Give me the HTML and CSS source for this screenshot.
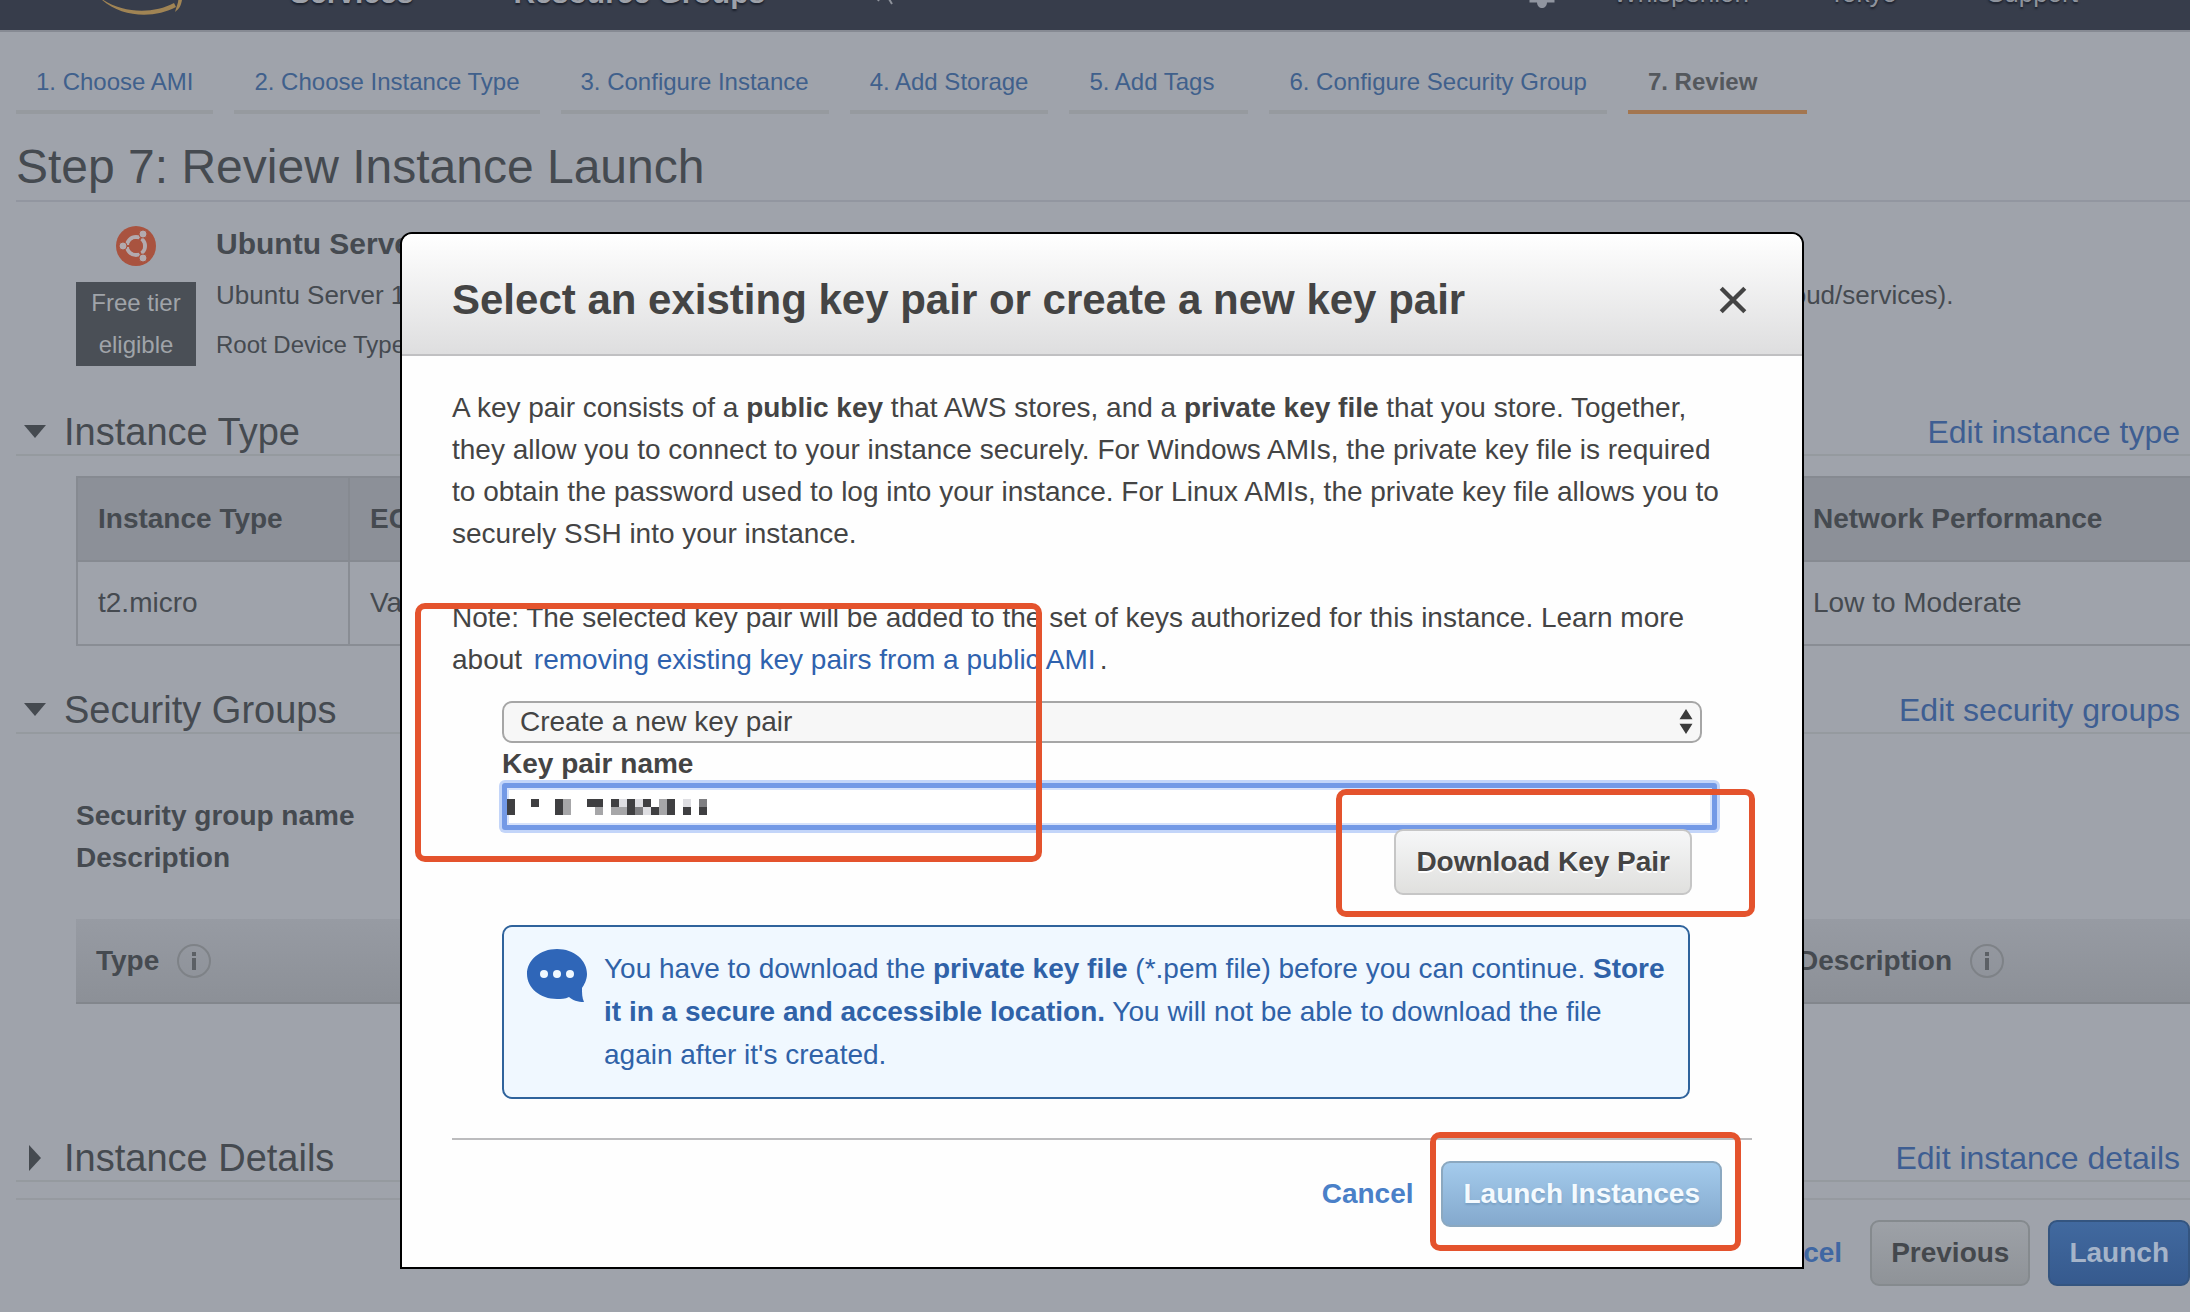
FILE: index.html
```html
<!DOCTYPE html>
<html lang="en">
<head>
<meta charset="utf-8">
<title>Review Instance Launch</title>
<link rel="stylesheet" href="styles.css">
</head>
<body>
<header class="topbar">
  <svg class="logo" viewBox="0 0 90 74" aria-hidden="true">
    <path d="M2 40C22 57 56 59 78 47l2 4C58 63 22 62 2 40z" fill="#a08454"/>
    <path d="M68 40c10-3 20-2 18 4-1 6-3 9-7 12 2-7 4-11 3-13-2-2-8-1-14 0z" fill="#a08454"/>
  </svg>
  <a class="top-main" href="#">Services</a>
  <a class="top-main groups" href="#">Resource Groups</a>
  <svg class="pin" viewBox="0 0 20 74" aria-hidden="true"><path d="M3 45l4-7M17 48l-6-10" stroke="#8d929b" stroke-width="2" fill="none"/></svg>
  <svg class="bell" viewBox="0 0 26 74" aria-hidden="true"><path d="M2 30h22v15H2z" fill="none" stroke="#9095a0" stroke-width="3"/><path d="M8 46h10c0 8-10 8-10 0z" fill="#9095a0"/></svg>
  <a class="top-sub user" href="#">Whisperlion</a>
  <a class="top-sub region" href="#">Tokyo</a>
  <a class="top-sub" href="#">Support</a>
</header>

<main class="page">
  <nav class="steps">
    <a href="#">1. Choose AMI</a>
    <a href="#">2. Choose Instance Type</a>
    <a href="#">3. Configure Instance</a>
    <a href="#">4. Add Storage</a>
    <a class="tags" href="#">5. Add Tags</a>
    <a href="#">6. Configure Security Group</a>
    <a class="current" href="#">7. Review</a>
  </nav>
  <h1 class="page-title">Step 7: Review Instance Launch</h1>

  <section class="ami">
    <div class="ami-side">
      <svg class="ubuntu" viewBox="0 0 40 40" aria-hidden="true">
        <circle cx="20" cy="20" r="20" fill="#a9533f"/>
        <circle cx="20" cy="20" r="9" fill="none" stroke="#b3aaae" stroke-width="4"/>
        <g stroke="#a9533f" stroke-width="2"><path d="M20 20L6 20M20 20l7-12M20 20l7 12"/></g>
        <circle cx="20" cy="20" r="7" fill="#a9533f"/>
        <g fill="#b3aaae" stroke="#a9533f" stroke-width="1"><circle cx="7" cy="20" r="4"/><circle cx="27" cy="8" r="4"/><circle cx="27" cy="32" r="4"/></g>
      </svg>
      <div class="badge">Free tier eligible</div>
    </div>
    <div class="ami-text">
      <h2>Ubuntu Server 18.04 LTS (HVM), SSD Volume Type</h2>
      <p class="ami-desc">Ubuntu Server 18.04 LTS (HVM),EBS General Purpose (SSD) Volume Type. Support available from Canonical (http://www.ubuntu.com/cloud/services).</p>
      <p class="ami-root">Root Device Type: ebs</p>
    </div>
  </section>

  <div class="section-head first">
    <svg class="caret" viewBox="0 0 26 26" aria-hidden="true"><path d="M2 6h22L13 19z"/></svg>
    <h2>Instance Type</h2>
    <a href="#">Edit instance type</a>
  </div>
  <table class="types">
    <thead><tr><th class="c-type">Instance Type</th><th>ECUs</th><th>vCPUs</th><th>Memory (GiB)</th><th class="c-net">Network Performance</th></tr></thead>
    <tbody><tr><td>t2.micro</td><td>Variable</td><td>1</td><td>1</td><td>Low to Moderate</td></tr></tbody>
  </table>

  <div class="section-head second">
    <svg class="caret" viewBox="0 0 26 26" aria-hidden="true"><path d="M2 6h22L13 19z"/></svg>
    <h2>Security Groups</h2>
    <a href="#">Edit security groups</a>
  </div>
  <div class="group-meta"><div>Security group name</div><div>Description</div></div>
  <table class="rules">
    <thead><tr>
      <th><span class="with-info">Type<svg viewBox="0 0 36 36" aria-hidden="true"><circle cx="18" cy="18" r="16"/><path d="M18 15v12M18 9v4"/></svg></span></th>
      <th>Protocol</th><th>Source</th>
      <th class="c-desc"><span class="with-info">Description<svg viewBox="0 0 36 36" aria-hidden="true"><circle cx="18" cy="18" r="16"/><path d="M18 15v12M18 9v4"/></svg></span></th>
    </tr></thead>
  </table>

  <div class="section-head third">
    <svg class="caret" viewBox="0 0 26 26" aria-hidden="true"><path d="M7 0v26l12-13z"/></svg>
    <h2>Instance Details</h2>
    <a href="#">Edit instance details</a>
  </div>
  <footer class="page-foot">
    <a href="#">Cancel</a>
    <button class="btn dim" type="button">Previous</button>
    <button class="btn dim-primary" type="button">Launch</button>
  </footer>
</main>

<div class="overlay">
  <div class="modal" role="dialog" aria-labelledby="dlg-title">
    <div class="modal-head">
      <h2 id="dlg-title">Select an existing key pair or create a new key pair</h2>
      <button class="close" type="button" aria-label="Close"><svg viewBox="0 0 28 28"><path d="M3 3l22 22M25 3L3 25"/></svg></button>
    </div>
    <div class="modal-body">
      <p class="intro">A key pair consists of a <b>public key</b> that AWS stores, and a <b>private key file</b> that you store. Together, they allow you to connect to your instance securely. For Windows AMIs, the private key file is required to obtain the password used to log into your instance. For Linux AMIs, the private key file allows you to securely SSH into your instance.</p>
      <p class="note">Note: The selected key pair will be added to the set of keys authorized for this instance. Learn more about <a href="#">removing existing key pairs from a public AMI</a>.</p>
      <form class="key-form">
        <div class="select-wrap">
          <select aria-label="Key pair option"><option>Create a new key pair</option></select>
          <svg viewBox="0 0 14 28" aria-hidden="true"><path d="M0 11L7 0l7 11zM0 16h14L7 27z"/></svg>
        </div>
        <label for="key-name">Key pair name</label>
        <div class="name-wrap">
          <input id="key-name" type="text">
          <svg viewBox="0 0 25 2" preserveAspectRatio="none" shape-rendering="crispEdges" aria-hidden="true">
            <path fill="#3f3f41" d="M0 0h1v2H0zM3 0h1v1H3zM6 0h1v2H6zM10 0h2v1h-2zM13 0h1v1h-1zM15 0h1v2h-1zM17 0h1v1h-1zM18 1h1v1h-1zM20 0h1v2h-1zM22 1h1v1h-1zM24 1h1v1h-1z"/>
            <path fill="#a6a6a8" d="M7 0h1v2H7zM11 1h1v1h-1zM13 1h2v1h-2zM19 0h1v2h-1z"/>
            <path fill="#7f7f82" d="M16 1h1v1h-1zM24 0h1v1h-1z"/>
            <path fill="#dedee2" d="M14 0h1v1h-1zM16 0h1v1h-1zM17 1h1v1h-1zM22 0h1v1h-1z"/>
          </svg>
        </div>
        <button class="btn download" type="button">Download Key Pair</button>
      </form>
      <div class="notice">
        <svg viewBox="0 0 62 54" aria-hidden="true"><path d="M31 0c17 0 30 11 30 25 0 6-3 11-5 14 0 5 0 10 2 14-6 0-12-2-15-5-4 2-8 2-12 2C14 50 1 39 1 25S14 0 31 0z" fill="#2f66b8"/><g fill="#f0f8ff"><circle cx="18" cy="25" r="4"/><circle cx="31" cy="25" r="4"/><circle cx="44" cy="25" r="4"/></g></svg>
        <p>You have to download the <b>private key file</b> (*.pem file) before you can continue. <b>Store it in a secure and accessible location.</b> You will not be able to download the file again after it's created.</p>
      </div>
      <div class="modal-foot">
        <a href="#">Cancel</a>
        <button class="btn launch" type="button">Launch Instances</button>
      </div>
    </div>
    <div class="mark mark-form"></div>
    <div class="mark mark-download"></div>
    <div class="mark mark-launch"></div>
  </div>
</div>
</body>
</html>
```
FILE: styles.css
```css
* { box-sizing: border-box; }
body {
  margin: 0;
  position: relative;
  min-height: 100vh;
  overflow: hidden;
  background: #9fa3ab;
  color: #454a50;
  font: 28px/42px "Liberation Sans", Arial, sans-serif;
}
h1, h2, p { margin: 0; font-weight: normal; }
a { color: #3e5e92; text-decoration: none; }
svg { display: block; flex: none; }

/* The bar is mostly scrolled out above the window. */
.topbar {
  display: flex;
  align-items: center;
  height: 76px;
  margin-top: -44px;
  padding: 0 112px 0 96px;
  background: #373d4b;
  border-bottom: 2px solid #868a93;
}
.topbar a { text-shadow: 0 2px 2px #1c212d; }
.logo { width: 90px; height: 74px; margin-right: 104px; }
.top-main { color: #9da1a9; font-size: 30px; font-weight: bold; }
.groups { margin-left: 100px; }
.pin { width: 20px; height: 74px; margin-left: 110px; }
.bell { width: 26px; height: 74px; margin-left: auto; }
.top-sub { color: #8e939c; font-size: 26px; }
.user { margin: 0 80px 0 58px; }
.region { margin-right: 90px; }

.page { padding-left: 16px; }
.steps { display: flex; gap: 21px; padding-top: 30px; font-size: 24px; line-height: 40px; }
.steps a { padding: 0 20px 8px; border-bottom: 4px solid #969a9f; color: #40608c; }
.steps .tags { padding-right: 34px; }
.steps .current { padding-right: 50px; color: #54585d; font-weight: bold; border-color: #a37650; }
.page-title {
  margin-top: 24px;
  padding-bottom: 4px;
  border-bottom: 2px solid #9296a0;
  font-size: 48px;
  line-height: 58px;
}

.ami { display: flex; gap: 20px; padding: 20px 0 0 60px; white-space: nowrap; }
.ami-side { width: 120px; padding-top: 4px; }
.ubuntu { width: 40px; height: 40px; margin: 0 auto 16px; }
.badge {
  padding: 0 10px;
  background: #4a4f56;
  color: #a0a4a9;
  font-size: 24px;
  text-align: center;
  white-space: normal;
}
.ami-text h2 { margin-bottom: 4px; font-size: 30px; font-weight: bold; line-height: 44px; }
.ami-desc { font-size: 26px; line-height: 50px; }
.ami-root { font-size: 24px; line-height: 50px; }

.section-head {
  display: flex;
  align-items: center;
  height: 46px;
  padding: 0 10px 0 6px;
  border-bottom: 2px solid #959a9f;
}
.section-head h2 { flex: 1; font-size: 38px; }
.section-head a { font-size: 32px; }
.caret { width: 26px; height: 26px; margin-right: 16px; fill: #454a50; }
.first { margin-top: 40px; }
.second { margin-top: 42px; }
.third { margin-top: 132px; }

table { width: calc(100% - 60px); margin-left: 60px; table-layout: fixed; border-collapse: collapse; }
th, td { text-align: left; white-space: nowrap; }
.types { margin-top: 20px; }
.types th, .types td { height: 84px; padding: 0 20px; border: 2px solid #898d94; border-right: 0; }
.types th { background: #8c9098; border-color: #868a91; }
.types .c-type { width: 272px; }
.types .c-net { width: 398px; }
.group-meta { margin: 61px 0 40px 60px; font-weight: bold; }
.rules th { height: 84px; padding: 0 20px; background: linear-gradient(#979ba3, #8c9097); border-bottom: 2px solid #82868c; }
.rules .c-desc { width: 412px; }
.with-info { display: flex; align-items: center; gap: 17px; }
.with-info svg { width: 36px; height: 36px; fill: none; stroke: #7e8287; stroke-width: 2; }
.with-info path { stroke: #5c6065; stroke-width: 4; }

.page-foot {
  display: flex;
  justify-content: flex-end;
  align-items: center;
  margin-top: 16px;
  padding: 20px 0 24px;
  border-top: 2px solid #969aa0;
}
.page-foot a { margin-right: 28px; color: #3f67a3; font-weight: bold; }
.btn {
  height: 66px;
  padding: 0 20px;
  border: 2px solid;
  border-radius: 9px;
  font: bold 28px/42px "Liberation Sans", Arial, sans-serif;
}
.page-foot .btn { padding: 0 19px; }
.dim { margin-right: 18px; background: linear-gradient(#9da1a7, #8f9398); border-color: #858a8e; color: #44484d; }
.dim-primary { background: linear-gradient(#41699f, #365a8e); border-color: #345580; color: #a5b4c9; }

.overlay {
  position: absolute;
  top: 232px;
  left: 0;
  right: 0;
  display: flex;
  justify-content: center;
  padding-left: 14px;
}
.modal {
  position: relative;
  width: 64%;
  min-width: 1404px;
  background: #fefefe;
  border: 2px solid #000;
  border-radius: 12px 12px 0 0;
  color: #444;
}
.modal a { color: #2f62ae; }
.modal-head {
  display: flex;
  align-items: center;
  justify-content: space-between;
  height: 122px;
  padding: 12px 54px 0 50px;
  border-bottom: 2px solid #c0c0c2;
  border-radius: 10px 10px 0 0;
  background: linear-gradient(#fff, #dededf);
}
.modal-head h2 { font-size: 42px; font-weight: bold; }
.close { padding: 0; border: 0; background: none; }
.close svg { width: 30px; height: 30px; fill: none; stroke: #444; stroke-width: 4; }
.modal-body { padding: 31px 50px 40px; }
.intro { padding-right: 24px; }
.note { margin-top: 42px; }
.note a { margin: 0 4px; }

.key-form { display: flex; flex-direction: column; width: 1215px; margin: 20px 0 0 50px; }
.select-wrap { position: relative; width: 1200px; }
.select-wrap select {
  display: block;
  width: 100%;
  height: 42px;
  padding: 0 16px;
  appearance: none;
  border: 2px solid #a6a6a6;
  border-radius: 10px;
  background: #f7f7f7;
  color: #444;
  font: 28px/36px "Liberation Sans", Arial, sans-serif;
}
.select-wrap svg { position: absolute; top: 8px; right: 9px; width: 14px; height: 26px; fill: #3c3c3c; }
.key-form label { padding-top: 2px; font-weight: bold; line-height: 38px; }
.name-wrap { position: relative; }
.name-wrap input {
  display: block;
  width: 100%;
  height: 47px;
  padding: 0 8px;
  border: 5px solid #7399e6;
  border-radius: 3px;
  box-shadow: 0 0 0 3px #c3d5f9, inset 0 0 0 2px #d6e2fb;
  background: #fff;
  font: 28px/36px "Liberation Sans", Arial, sans-serif;
}
.name-wrap svg { position: absolute; top: 16px; left: 5px; width: 200px; height: 16px; }
.download {
  position: relative;
  align-self: flex-end;
  margin: -1px 25px 0 0;
  background: linear-gradient(#f6f7f8, #e0e0de);
  border-color: #c6c6c6;
  color: #444;
  text-shadow: 0 2px 0 #fff;
}
.notice {
  display: flex;
  gap: 16px;
  width: 1188px;
  margin: 30px 0 0 50px;
  padding: 20px 16px 21px 22px;
  border: 2px solid #2f639c;
  border-radius: 10px;
  background: #f0f8ff;
  color: #2f62a8;
  line-height: 43px;
}
.notice svg { width: 62px; height: 54px; margin-top: 2px; }
.modal-foot {
  display: flex;
  justify-content: flex-end;
  align-items: center;
  gap: 28px;
  margin-top: 39px;
  padding: 21px 30px 0 0;
  border-top: 2px solid #bcbcbe;
}
.modal-foot a { color: #4a80c8; font-weight: bold; }
.launch { background: linear-gradient(#a4cbec, #84a9cd); border-color: #8ba8c0; color: #f4fafe; text-shadow: 0 2px 2px #7aa0c4; }

/* Annotation frames drawn over the dialog. */
.mark { position: absolute; border: 6px solid #e4532d; border-radius: 10px; pointer-events: none; }
.mark-form { left: 13px; top: 369px; width: 627px; height: 259px; }
.mark-download { right: 47px; top: 555px; width: 419px; height: 128px; }
.mark-launch { right: 61px; top: 898px; width: 311px; height: 119px; }
```
